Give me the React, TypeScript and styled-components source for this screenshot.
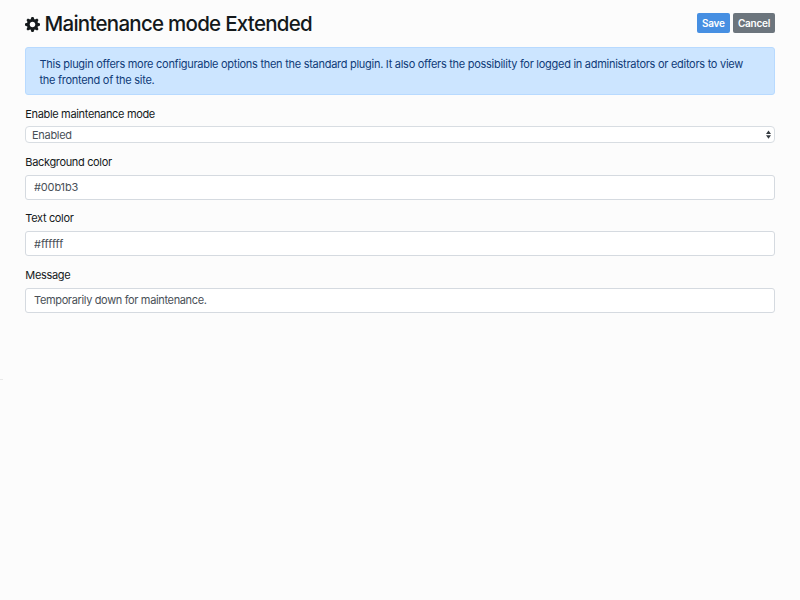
import React from "react";
import styled, { createGlobalStyle } from "styled-components";

const GlobalStyle = createGlobalStyle`
  * { box-sizing: border-box; }
  body {
    margin: 0;
    background: #fcfcfc;
    color: #212529;
    font-family: Inter, "Liberation Sans", sans-serif;
    font-size: 11px;
    line-height: 16px;
  }
`;

const Page = styled.main`
  position: relative;
  width: 800px;
  height: 600px;
  overflow: hidden;
  padding: 12px 25px 0;
`;

const Header = styled.header`
  display: flex;
  align-items: center;
  height: 24px;
  margin-bottom: 11px;
`;

const Gear = styled.svg`
  width: 15px;
  height: 15px;
  margin: 1px 4.5px 0 0;
  fill: #14191b;
`;

const Title = styled.h1`
  flex: 1;
  margin: 0;
  font-size: 20.5px;
  font-weight: 500;
  line-height: 24px;
  letter-spacing: -0.73px;
  color: #14191b;
`;

const Actions = styled.div`
  display: flex;
  gap: 3px;
  margin-top: -2px;
`;

const Button = styled.button<{ $tone: string; $width: number }>`
  width: ${(p) => p.$width}px;
  height: 20px;
  padding: 0;
  border: 0;
  border-radius: 2px;
  background: ${(p) => p.$tone};
  color: #fff;
  font: 600 10px/20px Inter, sans-serif;
  letter-spacing: -0.25px;
`;

const Notice = styled.p`
  height: 48px;
  margin: 0 0 11px;
  padding: 9px 13.5px 0;
  border: 1px solid #b8daff;
  border-radius: 3px;
  background: #cce5ff;
  color: #0f3b78;
  font-size: 11px;
  line-height: 15.6px;
  letter-spacing: -0.277px;
  white-space: nowrap;
`;

const Field = styled.div<{ $gap: number }>`
  display: flex;
  flex-direction: column;
  margin-bottom: ${(p) => p.$gap}px;
`;

const Label = styled.label`
  height: 16px;
  margin-bottom: 4px;
  padding-left: 0.3px;
  color: #14191b;
  letter-spacing: -0.34px;
`;

const Select = styled.div`
  display: flex;
  align-items: center;
  justify-content: space-between;
  height: 17px;
  padding: 0 3px 0 6px;
  border: 1px solid #d8dde2;
  border-radius: 4px;
  background: #fff;
  color: #495057;
  letter-spacing: -0.3px;
`;

const Arrows = styled.svg`
  width: 5px;
  height: 9px;
  fill: #343a40;
`;

const Input = styled.input<{ $tracking: number }>`
  width: 100%;
  height: 25px;
  margin-top: 1px;
  padding: 0 8px;
  border: 1px solid #d5dae0;
  border-radius: 3px;
  outline: 0;
  background: #fff;
  color: #495057;
  font: 400 11px/16px Inter, sans-serif;
  letter-spacing: ${(p) => p.$tracking}px;
`;

const EdgeMark = styled.span`
  position: absolute;
  left: 0;
  top: 379px;
  width: 3px;
  height: 1px;
  background: #e8e8e8;
`;

const fields = [
  { id: "background", label: "Background color", value: "#00b1b3", tracking: -0.15 },
  { id: "text", label: "Text color", value: "#ffffff", tracking: 0 },
  { id: "message", label: "Message", value: "Temporarily down for maintenance.", tracking: -0.35 },
];

export default function App() {
  return (
    <>
      <GlobalStyle />
      <Page>
        <Header>
          <Gear viewBox="0 0 8 8" aria-hidden="true">
            <path d="M3.5 0l-.5 1.19c-.1.03-.19.08-.28.13l-1.19-.5-.72.72.5 1.19c-.05.1-.09.18-.13.28l-1.19.5v1l1.19.5c.04.1.08.18.13.28l-.5 1.19.72.72 1.19-.5c.09.04.18.09.28.13l.5 1.19h1l.5-1.19c.09-.04.19-.08.28-.13l1.19.5.72-.72-.5-1.19c.04-.09.09-.19.13-.28l1.19-.5v-1l-1.19-.5c-.03-.09-.08-.19-.13-.28l.5-1.19-.72-.72-1.19.5c-.09-.04-.19-.09-.28-.13l-.5-1.19h-1zm.5 2.5c.83 0 1.5.67 1.5 1.5s-.67 1.5-1.5 1.5-1.5-.67-1.5-1.5.67-1.5 1.5-1.5z" />
          </Gear>
          <Title>Maintenance mode Extended</Title>
          <Actions>
            <Button $tone="#468fe2" $width={33.5}>Save</Button>
            <Button $tone="#6c757d" $width={42}>Cancel</Button>
          </Actions>
        </Header>
        <Notice>
          This plugin offers more configurable options then the standard plugin. It also offers the
          possibility for logged in administrators or editors to view
          <br />
          the frontend of the site.
        </Notice>
        <Field $gap={10.5}>
          <Label>Enable maintenance mode</Label>
          <Select>
            Enabled
            <Arrows viewBox="0 0 5 9" aria-hidden="true">
              <path d="M0 4L2.5 0.5L5 4zM0 5.2L2.5 8.7L5 5.2z" />
            </Arrows>
          </Select>
        </Field>
        {fields.map((f) => (
          <Field key={f.id} $gap={10.5}>
            <Label htmlFor={f.id}>{f.label}</Label>
            <Input id={f.id} defaultValue={f.value} $tracking={f.tracking} />
          </Field>
        ))}
        <EdgeMark />
      </Page>
    </>
  );
}
